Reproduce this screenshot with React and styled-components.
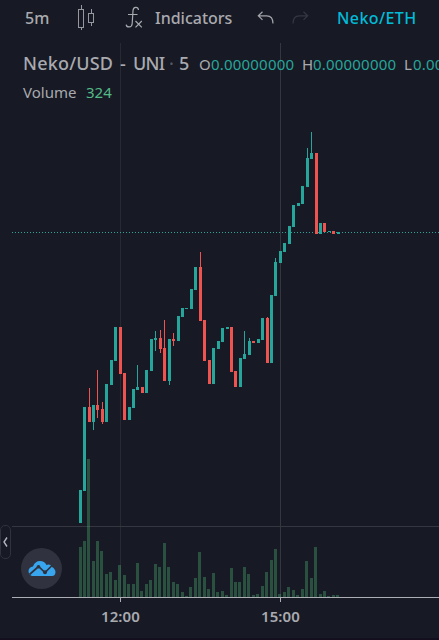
import styled, { createGlobalStyle } from "styled-components"

const GlobalStyle = createGlobalStyle`
    * {
        box-sizing: border-box;
    }

    body {
        margin: 0;
        background-color: #171924;
        overflow: hidden;
    }
`
const Page = styled.div`
    display: flex;
    flex-direction: column;
    width: 439px;
    height: 640px;
    overflow: hidden;
    background-color: #171924;
    border-bottom: 2px solid #130f1f;
    color: #a9aaaf;
    font-family: "Noto Sans", "Open Sans", sans-serif;
    white-space: nowrap;
`
const Toolbar = styled.header`
    display: flex;
    align-items: center;
    height: 36px;
    padding-left: 25px;
    flex-shrink: 0;

    svg {
        flex-shrink: 0;
    }
`
const Label = styled.span`
    display: block;
    flex-shrink: 0;
    width: ${({ $width }) => $width}px;
    margin-right: ${({ $gap }) => $gap || 0}px;
    font-size: ${({ $size }) => $size || 16}px;
    font-weight: ${({ $weight }) => $weight || 500};
    letter-spacing: ${({ $spacing }) => $spacing || 0}px;
    color: ${({ $color }) => $color || "inherit"};
`
const Body = styled.main`
    display: flex;
    height: 562px;
    flex-shrink: 0;
`
const Side = styled.aside`
    width: 12px;
    flex-shrink: 0;
    padding-top: 489px;
`
const Handle = styled.button`
    display: flex;
    align-items: center;
    justify-content: center;
    width: 11px;
    height: 34px;
    padding: 0;
    background: transparent;
    border: 1px solid #30323e;
    border-radius: 5px;
`
const Panel = styled.section`
    position: relative;
    width: 427px;
    height: 562px;
    overflow: hidden;
`
const Plot = styled.svg`
    display: block;
`
const Legend = styled.div`
    position: absolute;
    top: 17px;
    left: 11px;
`
const LegendRow = styled.div`
    display: flex;
    align-items: baseline;
    height: 29px;
    line-height: 20px;
`
const Logo = styled.div`
    position: absolute;
    left: 9px;
    top: 512px;
    display: flex;
    align-items: center;
    justify-content: center;
    width: 41px;
    height: 41px;
    border-radius: 50%;
    background-color: #31323f;
`
const TimeAxis = styled.footer`
    display: flex;
    align-items: center;
    height: 36px;
    padding-left: 101px;
    flex-shrink: 0;
`

const UP = "#26a69a"
const DOWN = "#ef5350"

// [x, top, bottom, color, high, low]
const candles = [
    [79, 490, 523, UP], [83, 407, 491, UP], [88, 407, 422, DOWN, 388], [92, 405, 422, UP, 405, 430],
    [96, 405, 410, DOWN, 370, 418], [101, 409, 422, DOWN, 402, 424], [105, 384, 422, UP], [110, 360, 385, UP],
    [114, 327, 361, UP], [119, 327, 374, DOWN], [123, 373, 420, DOWN], [128, 407, 420, UP],
    [132, 389, 408, UP], [136, 387, 390, UP, 365], [141, 387, 393, DOWN], [145, 370, 393, UP],
    [150, 339, 371, UP], [154, 338, 340, UP, 331, 351], [159, 338, 349, DOWN, 330, 353], [163, 348, 381, DOWN, 320],
    [168, 339, 381, UP, 339, 385], [172, 339, 341, DOWN, 333, 346], [177, 316, 341, UP], [181, 308, 317, UP],
    [185, 308, 309, UP], [190, 289, 309, UP], [194, 267, 290, UP], [199, 267, 321, DOWN, 252],
    [203, 320, 361, DOWN], [208, 360, 384, DOWN], [212, 348, 384, UP], [217, 341, 349, UP],
    [221, 328, 342, UP], [226, 327, 329, UP], [230, 327, 372, DOWN], [234, 371, 387, DOWN],
    [239, 358, 387, UP], [243, 354, 359, UP, 331], [248, 341, 355, UP, 338], [252, 341, 343, DOWN],
    [257, 339, 343, UP], [261, 318, 340, UP], [266, 318, 363, DOWN, 317], [270, 295, 363, UP],
    [274, 262, 296, UP, 258], [279, 251, 263, UP], [283, 243, 252, UP], [288, 226, 244, UP],
    [292, 205, 227, UP], [297, 203, 206, UP], [301, 186, 204, UP], [306, 158, 187, UP, 148],
    [310, 153, 159, UP, 132], [315, 153, 234, DOWN], [319, 223, 234, UP], [323, 223, 232, DOWN],
    [328, 231, 232, UP], [332, 231, 234, DOWN], [337, 232, 234, UP],
]

// [x, top]
const volumes = [
    [79, 547], [83, 541], [87, 459], [92, 561], [96, 541], [100, 551], [105, 574], [109, 572], [114, 580], [118, 565],
    [123, 575], [127, 584], [132, 584], [136, 563], [140, 591], [145, 584], [149, 580], [154, 564], [158, 567], [163, 543],
    [167, 567], [172, 582], [176, 584], [181, 592], [185, 596], [189, 587], [194, 578], [198, 552], [203, 577], [207, 589],
    [212, 573], [216, 592], [221, 591], [225, 595], [230, 568], [234, 582], [238, 582], [243, 567], [247, 574], [252, 595],
    [256, 594], [261, 586], [265, 572], [270, 560], [274, 549], [278, 594], [283, 592], [287, 587], [292, 590], [296, 595],
    [301, 589], [305, 561], [310, 578], [314, 547], [319, 594], [323, 591], [327, 596], [332, 595], [336, 595],
]

const CandlesIcon = () => (
    <svg width="18" height="26" viewBox="0 0 18 26" fill="none" stroke="#97989f" shapeRendering="crispEdges">
        <path d="M1.5 4.5h5v18h-5zM4.5 0v4M4.5 23v2M11.5 8.5h5v9h-5zM14.5 4v4M14.5 18v3" />
    </svg>
)

const FunctionIcon = () => (
    <svg width="19" height="24" viewBox="0 0 19 24" fill="none" stroke="#a9aaaf" strokeWidth="1.2">
        <path d="M13.5 4C13 0.4 8.3 0.5 8 4.8L7.2 17.5C7 22 1.5 21.7 1.2 18.6M3 8.5h9.5M10.5 15l6.3 6.3M16.8 15l-6.3 6.3" />
    </svg>
)

const UndoIcon = ({ color, flip }) => (
    <svg width="18" height="14" viewBox="0 0 18 14" fill="none" stroke={color} strokeWidth="1.2">
        <path d="M5.5 0.7L1.3 4.8l4.2 4.1M1.5 4.8h8.2c4 0 6.3 2.5 6.3 7.7" transform={flip ? "translate(18 0) scale(-1 1)" : undefined} />
    </svg>
)

const Chart = () => (
    <Plot width="427" height="562" viewBox="12 36 427 562" shapeRendering="crispEdges">
        <rect x="120" y="43" width="1" height="554" fill="#282933" />
        <rect x="280" y="43" width="1" height="554" fill="#363640" />
        <rect x="12" y="526" width="427" height="1" fill="#363640" />
        {volumes.map(([x, top]) => (
            <rect key={x} x={x} y={top} width="3" height={597 - top} fill="#4caf72" fillOpacity="0.37" />
        ))}
        <path d="M12 232.5h427" stroke={UP} strokeDasharray="1 2" />
        {candles.map(([x, top, bottom, color, high = top, low = bottom]) => (
            <g key={x} fill={color}>
                <rect x={x + 1} y={high} width="1" height={low - high} />
                <rect x={x} y={top} width="3" height={bottom - top} />
            </g>
        ))}
        <rect x="12" y="597" width="427" height="1" fill="#adaeb3" />
    </Plot>
)

// short marks that hang from the time axis line above each label
const Ticks = styled.div`
    display: flex;
    gap: 159px;
    height: 4px;
    padding-left: 120px;
    margin-bottom: -4px;
    flex-shrink: 0;
`
const Tick = styled.i`
    width: 1px;
    height: 4px;
    background-color: #adaeb3;
`

const App = () => {
    return (
        <Page>
            <GlobalStyle />
            <Toolbar>
                <Label $width={24} $gap={28}>5m</Label>
                <CandlesIcon />
                <Label $width={30} />
                <FunctionIcon />
                <Label $width={11} />
                <Label $width={78} $gap={24}>Indicators</Label>
                <UndoIcon color="#a3a4aa" />
                <Label $width={16} />
                <UndoIcon color="#353741" flip />
                <Label $width={28} />
                <Label $width={80} $spacing={0.4} $color="#00bcd9">Neko/ETH</Label>
            </Toolbar>
            <Body>
                <Side>
                    <Handle>
                        <svg width="5" height="10" viewBox="0 0 5 10" fill="none" stroke="#b2b5be" strokeWidth="1.4">
                            <path d="M4 0.5L1 5l3 4.5" />
                        </svg>
                    </Handle>
                </Side>
                <Panel>
                    <Chart />
                    <Legend>
                        <LegendRow>
                            <Label $width={90} $size={18} $spacing={0.2} $gap={7}>Neko/USD</Label>
                            <Label $width={7} $size={18} $gap={6}>-</Label>
                            <Label $width={31} $size={18} $spacing={-0.7} $gap={5}>UNI</Label>
                            <Label $width={5} $size={18} $gap={5} $color="#555762">·</Label>
                            <Label $width={10} $size={18} $gap={10}>5</Label>
                            <Label $width={12} $size={15} $weight={400}>O</Label>
                            <Label $width={84} $size={15} $weight={400} $spacing={0.2} $gap={7} $color={UP}>0.00000000</Label>
                            <Label $width={11} $size={15} $weight={400}>H</Label>
                            <Label $width={83} $size={15} $weight={400} $spacing={0.2} $gap={8} $color={UP}>0.00000000</Label>
                            <Label $width={9} $size={15} $weight={400}>L</Label>
                            <Label $width={84} $size={15} $weight={400} $spacing={0.2} $color={UP}>0.00000000</Label>
                        </LegendRow>
                        <LegendRow>
                            <Label $width={54} $size={15} $weight={400} $gap={9}>Volume</Label>
                            <Label $width={27} $size={15} $weight={400} $color="#53b987">324</Label>
                        </LegendRow>
                    </Legend>
                    <Logo>
                        <svg width="28" height="17" viewBox="0 0 28 17">
                            <path d="M4 16Q0.5 15 0.5 11Q0.8 7 5 6.5Q7 1 12 1Q16.5 1 18.5 5Q22 3.5 24 7Q27.5 9 27.5 12.5Q27 16 24 16Z" fill="#37a6ef" />
                            <path d="M1.5 14.5L10.5 6.5L17 12.5L24 5.5" fill="none" stroke="#31323f" strokeWidth="1.7" />
                            <circle cx="10.5" cy="6.7" r="1.8" fill="#31323f" />
                            <circle cx="17" cy="12.3" r="2" fill="#31323f" />
                        </svg>
                    </Logo>
                </Panel>
            </Body>
            <Ticks>
                <Tick />
                <Tick />
            </Ticks>
            <TimeAxis>
                <Label $width={40} $size={15} $weight={600} $spacing={0.1} $gap={120}>12:00</Label>
                <Label $width={40} $size={15} $weight={600} $spacing={0.1}>15:00</Label>
            </TimeAxis>
        </Page>
    )
}

export default App
